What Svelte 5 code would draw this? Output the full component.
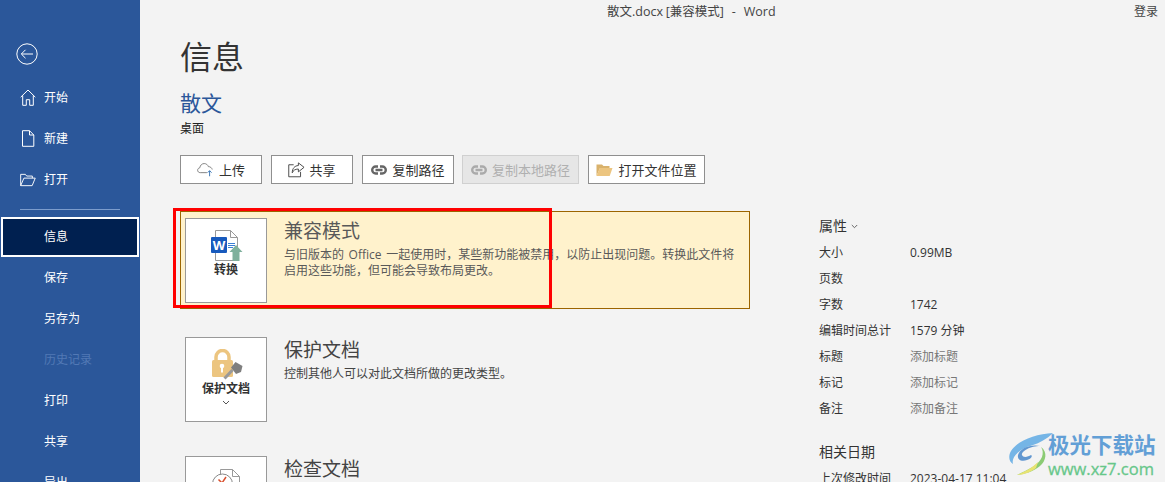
<script>
  const navTop = [
    { label: "开始", icon: "home" },
    { label: "新建", icon: "doc" },
    { label: "打开", icon: "open" }
  ];
  const navBottom = [
    { label: "信息", active: true },
    { label: "保存" },
    { label: "另存为" },
    { label: "历史记录", disabled: true },
    { label: "打印" },
    { label: "共享" },
    { label: "导出" }
  ];
  const props = [
    { name: "大小", value: "0.99MB" },
    { name: "页数", value: "" },
    { name: "字数", value: "1742" },
    { name: "编辑时间总计", value: "1579 分钟" },
    { name: "标题", value: "添加标题", add: true },
    { name: "标记", value: "添加标记", add: true },
    { name: "备注", value: "添加备注", add: true }
  ];
</script>

<div class="page">
  <nav class="side">
    <div class="back">
      <svg width="24" height="24" viewBox="0 0 24 24" fill="none" stroke="#fff" stroke-width="1">
        <circle cx="12" cy="12" r="10.2" />
        <path d="M6.5 12H18M10.5 7.8 6.3 12l4.2 4.2" />
      </svg>
    </div>
    {#each navTop as item}
      <div class="nav-item">
        <span class="nav-icon">
          {#if item.icon === "home"}
            <svg width="16" height="17" viewBox="0 0 16 17" fill="none" stroke="#fff" stroke-width="1">
              <path d="M.7 8.2 8 1l7.3 7.2M2.7 6.5v9.8h3.6v-5.6h3.4v5.6h3.6V6.5" />
            </svg>
          {:else if item.icon === "doc"}
            <svg width="14" height="17" viewBox="0 0 14 17" fill="none" stroke="#fff" stroke-width="1">
              <path d="M1.5.7h7l4.3 4.3v11.3H1.5zM8.5.7V5h4.3" />
            </svg>
          {:else}
            <svg width="17" height="14" viewBox="0 0 17 14" fill="none" stroke="#fff" stroke-width="1">
              <path d="M.7 13V1h5l1.4 1.8h6V5M.7 13h12.2L16.2 5H4.2z" />
            </svg>
          {/if}
        </span>
        {item.label}
      </div>
    {/each}
    <div class="divider"></div>
    {#each navBottom as item}
      <div class="nav-item" class:active={item.active} class:disabled={item.disabled}>{item.label}</div>
    {/each}
  </nav>

  <main class="main">
    <div class="titlebar">
      <span class="doc-title">散文.docx [兼容模式]&nbsp;&nbsp; - &nbsp;&nbsp;Word</span>
      <span class="login">登录</span>
    </div>

    <h1>信息</h1>
    <div class="doc-name">散文</div>
    <div class="doc-path">桌面</div>

    <div class="actions">
      <button class="w82 tight">
        <svg width="18" height="15" viewBox="0 0 20 16" fill="none">
          <path d="M11 11.5H3.6C1.9 11.5.7 10.3.7 8.8c0-1.4 1-2.500 2.400-2.700C3.500 3.300 5.500 1.400 8 1.400c2.200 0 4 1.400 4.600 3.400 2.200 0 3.900 1.300 4.300 3.200" stroke="#777" />
          <path d="M14 15.500V9.500M11.800 11.500 14 9.300l2.200 2.200" stroke="#2b6cb0" />
        </svg>
        上传
      </button>
      <button class="w82 tight">
        <svg width="17" height="17" viewBox="0 0 18 17" fill="none" stroke="#444">
          <path d="M11 1.500 17 6.200 11 11V8C7.500 8 5.500 9.500 4.500 12 4.500 7.500 7 4.500 11 4.300z" />
          <path d="M6 3.500H.8v12.700h12.500V11" />
        </svg>
        共享
      </button>
      <button class="w92">
        <svg width="16" height="10" viewBox="0 0 16 10" fill="none" stroke="#666" stroke-width="2.4">
          <path d="M7 1.500H4.700a3.500 3.500 0 0 0 0 7H7M9 1.500h2.300a3.500 3.500 0 0 1 0 7H9M4.500 5h7" />
        </svg>
        复制路径
      </button>
      <button class="w117 off" disabled>
        <svg width="16" height="10" viewBox="0 0 16 10" fill="none" stroke="#aaa" stroke-width="2.4">
          <path d="M7 1.500H4.700a3.500 3.500 0 0 0 0 7H7M9 1.500h2.300a3.500 3.500 0 0 1 0 7H9M4.500 5h7" />
        </svg>
        复制本地路径
      </button>
      <button class="w117">
        <svg width="17" height="14" viewBox="0 0 17 14">
          <path d="M.5 13V1.500h5.500l1.500 1.500h6v2H4z" fill="#d9b26c" />
          <path d="M.5 13 3.800 5H16.500l-2.800 8z" fill="#ecc580" />
        </svg>
        打开文件位置
      </button>
    </div>

    <div class="body">
      <div class="cards">
        <section class="card warn">
          <div class="tile">
            <svg class="tile-icon" width="34" height="32" viewBox="0 0 34 32">
              <path d="M6.500.5h15l7 7v23h-22z" fill="#fff" stroke="#999" />
              <path d="M21.500.5v7h7" fill="none" stroke="#999" />
              <rect x="2" y="7" width="16" height="16" fill="#185abd" rx="1" />
              <text x="10" y="19.500" class="w-letter">W</text>
              <path d="M19 13.500h7M19 15.500h7M19 17.500h5" stroke="#3b7fd4" />
              <path d="M27 15 33.500 22H30.500v9h-7v-9h-3z" fill="#7fb09d" />
            </svg>
            <b>转换</b>
          </div>
          <div class="card-text">
            <h2>兼容模式</h2>
            <p>与旧版本的 Office 一起使用时，某些新功能被禁用，以防止出现问题。转换此文件将启用这些功能，但可能会导致布局更改。</p>
          </div>
        </section>

        <section class="card">
          <div class="tile">
            <svg class="tile-icon" width="34" height="32" viewBox="0 0 34 32">
              <path d="M7 12V8a6.500 6.500 0 0 1 13 0v4" fill="none" stroke="#ecc580" stroke-width="3.500" />
              <rect x="3" y="11" width="21" height="17" rx="1.500" fill="#ecc580" />
              <circle cx="13" cy="17" r="2.300" fill="#fff" />
              <rect x="12" y="17.500" width="2" height="6" fill="#fff" />
              <path d="M15.500 29.500 23.500 21" stroke="#999" stroke-width="3" fill="none" />
              <path d="M22 18.500l4.500-5.500 7 4-1.500 6-5 2z" fill="#7f7f7f" />
            </svg>
            <b>保护文档</b>
            <svg class="tile-caret" width="8" height="5" viewBox="0 0 8 5" fill="none" stroke="#555">
              <path d="M1 1l3 3 3-3" />
            </svg>
          </div>
          <div class="card-text">
            <h2>保护文档</h2>
            <p>控制其他人可以对此文档所做的更改类型。</p>
          </div>
        </section>

        <section class="card">
          <div class="tile">
            <svg class="tile-icon" width="34" height="32" viewBox="0 0 34 32">
              <path d="M11.500 1.500h12l7 7v20h-19z" fill="#fff" stroke="#999" />
              <path d="M23.500 1.500v7h7" fill="none" stroke="#999" />
              <circle cx="13.500" cy="16" r="10" fill="#fff" stroke="#888" />
              <path d="M9.500 11.500 13 15l4-6" fill="none" stroke="#d9502e" stroke-width="1.500" />
            </svg>
          </div>
          <div class="card-text">
            <h2>检查文档</h2>
          </div>
        </section>
      </div>

      <aside class="info">
        <h3>属性 <svg width="7" height="5" viewBox="0 0 7 5" fill="none" stroke="#666"><path d="M.8 1l2.700 2.700L6.200 1" /></svg></h3>
        {#each props as row}
          <div class="prop">
            <span>{row.name}</span>
            <span class:add={row.add}>{row.value}</span>
          </div>
        {/each}
        <h3 class="dates">相关日期</h3>
        <div class="prop">
          <span>上次修改时间</span>
          <span>2023-04-17 11:04</span>
        </div>
      </aside>
    </div>
  </main>

  <!-- annotation over the screenshot -->
  <div class="red-box"></div>

  <!-- watermark -->
  <div class="mark">
    <svg width="46" height="46" viewBox="0 0 46 46" fill="none">
      <path d="M45 2C28 3 10 9 3 20c-3 5-2 11 2 13-2-7 6-15 20-19 6-2 14-6 20-12z" fill="#6fb2e6" />
      <path d="M32 15c-9-2-20 2-22 9-1 5 4 7 9 5 4-1 6-4 4-5-3 2-8 3-9 0-1-4 9-9 18-9z" fill="#5a93cf" />
      <path d="M33 16c4 6 1 14-7 19-6 4-13 7-17 9 7-1 16-3 23-9 6-5 8-14 1-19z" fill="#86c96e" />
      <path d="M30 31c-6 6-14 10-21 13 7 0 14-3 19-7z" fill="#e8e36c" />
    </svg>
    <div class="mark-text">
      <span class="mark-cn">极光下载站</span>
      <span class="mark-url">www.xz7.com</span>
    </div>
  </div>
</div>

<style>
  :global(body) {
    margin: 0;
    overflow: hidden;
  }
  .page {
    position: relative;
    display: flex;
    width: 1165px;
    height: 482px;
    overflow: hidden;
    background: #f3f3f3;
    color: #333;
    font-family: "Open Sans", "Noto Sans CJK SC", sans-serif;
    font-size: 12px;
  }

  .side {
    flex: none;
    width: 140px;
    height: 100%;
    background: #2b579a;
    color: #fff;
    padding-top: 42px;
    box-sizing: border-box;
  }
  .back {
    height: 24px;
    padding-left: 15px;
    margin-bottom: 11px;
  }
  .nav-item {
    position: relative;
    height: 41px;
    line-height: 41px;
    padding-left: 44px;
    box-sizing: border-box;
  }
  .nav-icon {
    position: absolute;
    left: 20px;
    top: 0;
    bottom: 0;
    width: 16px;
    display: flex;
    align-items: center;
    justify-content: center;
  }
  .nav-item.active {
    height: 40px;
    line-height: 36px;
    margin: 0 1px;
    padding-left: 41px;
    background: #002050;
    border: 2px solid #fff;
  }
  .nav-item.disabled {
    color: #5279b5;
  }
  .divider {
    height: 1px;
    width: 100px;
    margin: 9px 0 7px 20px;
    background: #7c9ccc;
  }

  .main {
    flex: 1;
    min-width: 0;
    padding-left: 40px;
  }
  .titlebar {
    display: flex;
    justify-content: space-between;
    height: 24px;
    line-height: 24px;
    padding: 0 7px 0 427px;
    font-size: 12px;
    color: #444;
  }
  .doc-title {
    font-size: 12.5px;
    word-spacing: -0.6px;
  }
  h1 {
    margin: 9px 0 0;
    font-size: 32px;
    line-height: 48px;
    font-weight: 400;
    color: #333;
  }
  .doc-name {
    margin-top: 7px;
    font-size: 21px;
    line-height: 30px;
    color: #2b579a;
  }
  .doc-path {
    margin-top: 2px;
    line-height: 18px;
    color: #222;
  }
  .actions {
    display: flex;
    gap: 9px;
    margin-top: 17px;
  }
  .actions button {
    display: flex;
    align-items: center;
    justify-content: center;
    gap: 5px;
    height: 29px;
    padding: 0;
    background: #fff;
    border: 1px solid #8f8f8f;
    color: #333;
    font: inherit;
    font-size: 13px;
    white-space: nowrap;
  }
  .actions .tight { gap: 4px; }
  .actions .w82 { width: 82px; }
  .actions .w92 { width: 92px; margin-right: -1px; }
  .actions .w117 { width: 117px; }
  .actions .off {
    background: #e6e6e6;
    border-color: #d0d0d0;
    color: #b0b0b0;
  }

  .body {
    display: flex;
    margin-top: 27px;
  }
  .cards {
    flex: none;
    width: 570px;
    margin-right: 69px;
  }
  .card {
    display: flex;
    align-items: flex-start;
    gap: 17px;
    padding: 0 5px;
    min-height: 85px;
    margin-bottom: 34px;
  }
  .card:first-child {
    box-sizing: border-box;
    height: 98px;
    padding: 6px 12px 0 4px;
    margin-bottom: 28px;
  }
  .warn {
    background: #fff2cc;
    border: 1px solid #9c6500;
  }
  .tile {
    flex: none;
    display: flex;
    flex-direction: column;
    align-items: center;
    box-sizing: border-box;
    width: 82px;
    height: 85px;
    padding-top: 11px;
    background: #fff;
    border: 1px solid #999;
  }
  .tile-icon {
    display: block;
  }
  .w-letter {
    font-size: 13px;
    font-weight: 700;
    fill: #fff;
    text-anchor: middle;
    font-family: "Open Sans", sans-serif;
  }
  .tile b {
    margin-top: -1px;
    line-height: 18px;
    font-size: 12px;
    font-weight: 700;
    color: #333;
  }
  .tile-caret {
    margin-top: 2px;
  }
  .card-text {
    min-width: 0;
    padding-top: 1px;
  }
  h2 {
    margin: 0;
    font-size: 19px;
    line-height: 24px;
    font-weight: 400;
    color: #444;
  }
  .card-text p {
    margin: 4px 0 0;
    line-height: 15.5px;
    word-spacing: 1.5px;
    color: #444;
  }
  .warn h2,
  .warn p {
    color: #595959;
  }

  .info {
    flex: 1;
    margin-top: 5px;
  }
  h3 {
    margin: 0 0 4px;
    font-size: 14px;
    line-height: 20px;
    font-weight: 400;
    color: #333;
  }
  h3 svg {
    vertical-align: 2px;
  }
  .prop {
    display: flex;
    height: 26px;
    line-height: 26px;
    white-space: nowrap;
  }
  .prop span:first-child {
    flex: none;
    width: 91px;
  }
  .prop .add {
    color: #777;
  }
  .dates {
    margin-top: 20px;
    margin-bottom: 4px;
  }

  .red-box {
    position: absolute;
    left: 173px;
    top: 208px;
    width: 379px;
    height: 100px;
    box-sizing: border-box;
    border: 3px solid #f00;
  }

  .mark {
    position: absolute;
    left: 1008px;
    top: 431px;
    display: flex;
    opacity: 0.95;
  }
  .mark-text {
    display: flex;
    flex-direction: column;
    margin-left: -6px;
    font-weight: 700;
  }
  .mark-cn {
    font-size: 21.5px;
    line-height: 28px;
    color: #5b9bd5;
    white-space: nowrap;
  }
  .mark-url {
    font-size: 16.5px;
    line-height: 20px;
    font-weight: 400;
    color: #5fc585;
    -webkit-text-stroke: 0.3px #5fc585;
  }
</style>
